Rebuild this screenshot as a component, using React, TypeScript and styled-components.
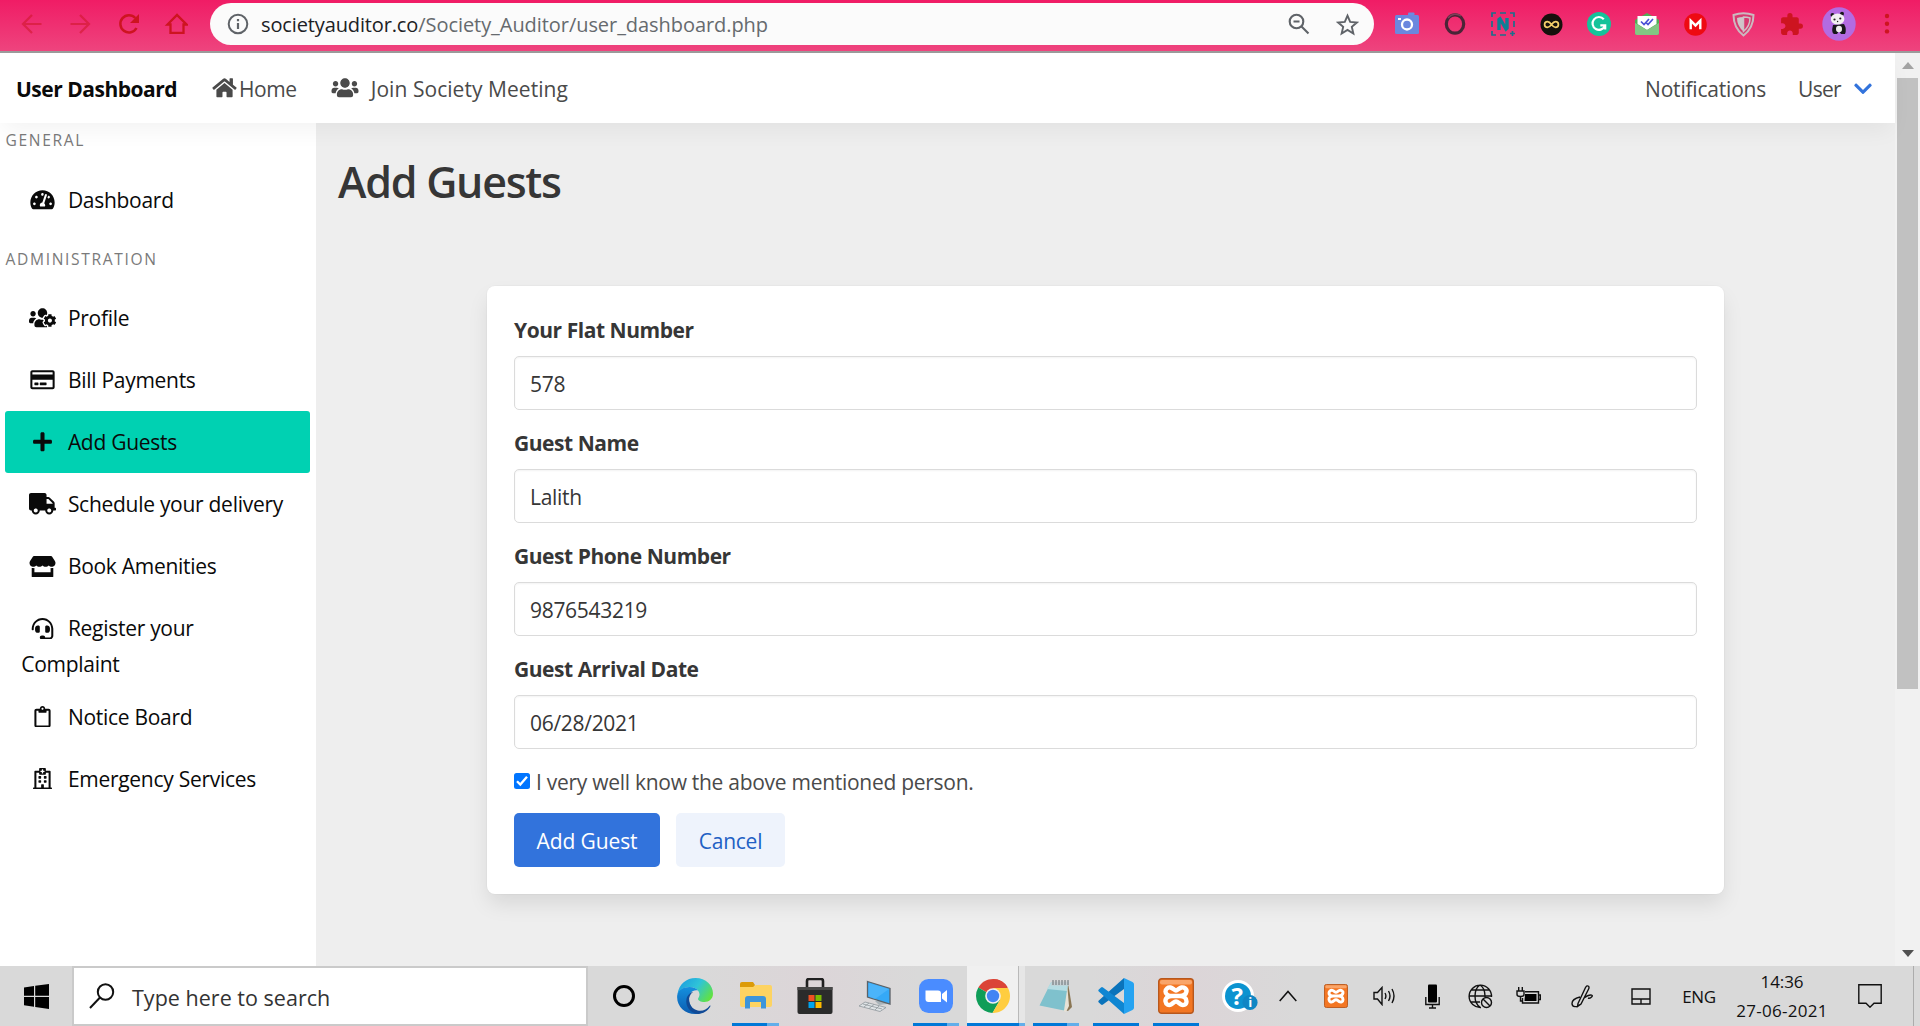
import React from "react";
import styled, { createGlobalStyle } from "styled-components";
import {
  FaHome,
  FaUsers,
  FaTachometerAlt,
  FaUsersCog,
  FaRegCreditCard,
  FaPlus,
  FaTruck,
  FaStore,
  FaHeadset,
  FaRegClipboard,
  FaRegHospital,
  FaChevronDown,
} from "react-icons/fa";
import { MdExtension } from "react-icons/md";

const Global = createGlobalStyle`
  * { box-sizing: border-box; }
  body {
    margin: 0;
    overflow: hidden;
    font-family: "Open Sans", "Noto Sans", sans-serif;
    font-size: 21px;
    letter-spacing: -0.28px;
    color: #4a4a4a;
  }
`;

const Screen = styled.div`
  width: 1920px;
  height: 1026px;
  display: flex;
  flex-direction: column;
  background: #fff;
`;

/* Browser toolbar */
const Toolbar = styled.header`
  height: 53px;
  flex: none;
  display: flex;
  align-items: flex-start;
  padding: 3px 0 0 8px;
  background: linear-gradient(#f01c65, #ee447e);
  border-bottom: 2px solid #9b9b9b;
`;
const ToolSlot = styled.div<{ $dim?: boolean }>`
  width: 48px;
  height: 42px;
  display: flex;
  align-items: center;
  justify-content: center;
  color: #cd1420;
  opacity: ${(p) => (p.$dim ? 0.5 : 1)};
`;
const Omnibox = styled.div`
  width: 1164px;
  height: 42px;
  margin: 0 9px 0 10px;
  padding: 0 15px 0 17px;
  border-radius: 21px;
  background: #fbfbfb;
  display: flex;
  align-items: center;
  color: #5f6368;
`;
const Url = styled.div`
  flex: 1;
  margin-left: 12px;
  font-size: 20px;
  line-height: 40px;
  padding-top: 1px;
  letter-spacing: -0.06px;
  color: #666a6e;
`;
const Domain = styled.span`
  color: #202124;
  letter-spacing: -0.13px;
`;
const StarWrap = styled.span`
  display: flex;
  margin-left: 26px;
`;

/* Page */
const Page = styled.div`
  flex: 1;
  min-height: 0;
  display: flex;
`;
const Document = styled.div`
  width: 1895px;
  display: flex;
  flex-direction: column;
`;
const Navbar = styled.nav`
  position: relative;
  z-index: 1;
  height: 70px;
  flex: none;
  display: flex;
  align-items: center;
  padding: 2px 23px 0 16px;
  background: #fff;
  box-shadow: 0 10.8px 21.6px -2.7px rgba(10, 10, 10, 0.05);
`;
const Brand = styled.strong`
  width: 196px;
  color: #0a0a0a;
  letter-spacing: -0.5px;
`;
const NavLink = styled.a<{ $gap?: number; $ls?: number }>`
  display: flex;
  align-items: center;
  gap: ${(p) => p.$gap ?? 0}px;
  letter-spacing: ${(p) => p.$ls ?? -0.28}px;
`;
const NavIcon = styled.span<{ $w: number; $lift?: number }>`
  display: flex;
  margin-bottom: ${(p) => p.$lift ?? 2}px;
  svg { width: ${(p) => p.$w}px; height: 21.6px; }
`;
const NavSpacer = styled.div<{ $w?: number }>`
  ${(p) => (p.$w ? `width: ${p.$w}px;` : "flex: 1;")}
`;
const Body = styled.div`
  flex: 1;
  display: flex;
  min-height: 0;
`;
const Sidebar = styled.aside`
  width: 316px;
  padding: 1px 6px 0 5px;
  color: #0a0a0a;
`;
const MenuLabel = styled.p<{ $top?: number; $bottom?: number }>`
  margin: ${(p) => p.$top ?? 0}px 0 ${(p) => p.$bottom ?? 12}px 0.5px;
  font-size: 15.6px;
  line-height: 33px;
  letter-spacing: 1.65px;
  color: #7a7a7a;
`;
const MenuItem = styled.a<{ $active?: boolean }>`
  display: block;
  padding: 10.8px 16.2px;
  border-radius: 3px;
  background: ${(p) => (p.$active ? "#00d1b2" : "transparent")};
`;
const MenuRow = styled.span`
  display: flex;
  align-items: center;
  height: 40.5px;
`;
const MenuIcon = styled.span`
  width: 32.4px;
  margin: 0 9.5px 0 4.8px;
  display: flex;
  justify-content: center;
  svg { width: 27px; height: 21.6px; }
`;
const MenuWrap = styled.span`
  display: block;
  line-height: 30px;
  margin-bottom: -4px;
`;
const Content = styled.main`
  flex: 1;
  padding: 34px 22px 0;
  background: #eee;
`;
const Title = styled.h1`
  margin: 0;
  font-size: 43px;
  font-weight: 600;
  line-height: 50px;
  letter-spacing: -1.25px;
  color: #363636;
`;
const Card = styled.form`
  width: 1237px;
  margin: 79px 0 0 149px;
  padding: 27px;
  border-radius: 8px;
  background: #fff;
  box-shadow: 0 10.8px 21.6px -2.7px rgba(10, 10, 10, 0.1), 0 0 0 1px rgba(10, 10, 10, 0.02);
`;
const Field = styled.div`
  margin-bottom: 16px;
`;
const Label = styled.label`
  display: block;
  height: 32px;
  margin-bottom: 11px;
  line-height: 34px;
  font-weight: 700;
  letter-spacing: -0.45px;
  color: #363636;
`;
const Input = styled.input`
  display: block;
  width: 100%;
  height: 54px;
  padding: 1px 15px 0;
  border: 1px solid #dbdbdb;
  border-radius: 5px;
  font: inherit;
  letter-spacing: -0.3px;
  color: #363636;
  background: #fff;
  box-shadow: inset 0 1px 2px rgba(10, 10, 10, 0.05);
  outline: none;
`;
const Consent = styled.div`
  display: flex;
  align-items: center;
  height: 34px;
  margin-bottom: 14px;
`;
const Check = styled.span`
  width: 16px;
  height: 16px;
  margin: 0 6px 2px 0;
  border-radius: 2.5px;
  background: #0075ff;
  display: flex;
`;
const Buttons = styled.div`
  display: flex;
  gap: 16px;
`;
const Button = styled.button<{ $light?: boolean }>`
  width: ${(p) => (p.$light ? 109 : 146)}px;
  height: 54px;
  padding: 1px 0 0;
  border: 0;
  border-radius: 5px;
  font: inherit;
  letter-spacing: ${(p) => (p.$light ? -0.25 : -0.1)}px;
  color: ${(p) => (p.$light ? "#2160c4" : "#fff")};
  background: ${(p) => (p.$light ? "#eef3fc" : "#3273dc")};
`;
const Scrollbar = styled.div`
  width: 25px;
  display: flex;
  flex-direction: column;
  align-items: center;
  background: #f1f1f1;
`;
const ScrollArrow = styled.div<{ $down?: boolean }>`
  height: 25px;
  display: flex;
  align-items: center;
  color: ${(p) => (p.$down ? "#505050" : "#a3a3a3")};
  transform: ${(p) => (p.$down ? "rotate(180deg)" : "none")};
`;
const Thumb = styled.div`
  width: 21px;
  height: 611px;
  margin-bottom: auto;
  background: #c1c1c1;
`;

/* Taskbar */
const Taskbar = styled.footer`
  height: 60px;
  flex: none;
  display: flex;
  background: linear-gradient(90deg, #d9d9d9 0, #d9d9d9 700px, #dcd5d8 810px, #d9d9d9 920px, #d9d9d9 1090px, #dcd5d8 1190px, #d9d9d9 1300px);
  color: #111;
`;
const Slot = styled.div<{ $w: number; $left?: number }>`
  width: ${(p) => p.$w}px;
  padding-left: ${(p) => p.$left ?? 0}px;
  flex: none;
  display: flex;
  align-items: center;
  justify-content: center;
`;
const Search = styled.div`
  width: 516px;
  flex: none;
  display: flex;
  align-items: center;
  border: 2px solid #cacaca;
  background: #fff;
  padding: 0 0 0 15px;
  font-size: 21.5px;
  letter-spacing: 0.02px;
  color: #333;
`;
const SearchText = styled.span`
  margin: 3px 0 0 17px;
`;
const TaskApp = styled.div<{ $w: number; $bar?: number; $tail?: number }>`
  width: ${(p) => p.$w}px;
  flex: none;
  display: flex;
  flex-direction: column;
  align-items: center;
  &::after {
    content: "";
    width: ${(p) => p.$bar ?? 0}px;
    height: 3px;
    background: linear-gradient(90deg, #0078d7 ${(p) => (p.$bar ?? 0) - (p.$tail ?? 0)}px, #62aeea 0);
  }
`;
const AppIcon = styled.div`
  flex: 1;
  display: flex;
  align-items: center;
  justify-content: center;
  padding-top: 3px;
`;
const ActiveApp = styled.div`
  width: 58px;
  margin: 0 1px;
  flex: none;
  display: flex;
  flex-direction: column;
`;
const ActiveTop = styled.div`
  flex: 1;
  display: flex;
`;
const ActiveFace = styled.div`
  width: 52px;
  background: #f0f0f0;
  border-right: 1px solid #b9b9b9;
  display: flex;
  align-items: center;
`;
const ActiveEdge = styled.div`
  width: 6px;
  background: #e6e6e6;
`;
const ActiveBar = styled.div`
  height: 3px;
  background: linear-gradient(90deg, #0078d7 52px, #62aeea 0);
`;
const Tray = styled.span`
  font-size: 17px;
  letter-spacing: -0.4px;
  padding-top: 1px;
`;
const Clock = styled.div`
  width: 108px;
  flex: none;
  padding-top: 2px;
  font-size: 17px;
  line-height: 28.5px;
  letter-spacing: 0.3px;
  text-align: center;
`;
const ClockTime = styled.div`
  letter-spacing: -0.1px;
`;
const ShowDesktop = styled.div`
  width: 16px;
  flex: none;
  border-left: 1px solid #acacac;
  margin-left: 9px;
`;

const Xampp = ({ size }: { size: number }) => (
  <svg width={size} height={size} viewBox="0 0 36 36">
    <rect x="0.7" y="0.7" width="34.6" height="34.6" rx="3" fill="#f37623" stroke="#b8571c" strokeWidth="1.4" />
    <rect x="2" y="2" width="32" height="4.500" rx="2" fill="#f9a56a" />
    <g fill="none" stroke="#fff" strokeWidth="4.400" strokeLinejoin="round" strokeLinecap="round">
      <path d="M14 18h8M14 18c-4 0-6.500-2-6.500-4.500S10 9 12.500 9.500s4 3 5.500 3 3-2.500 5.500-3S29 11 28.500 13.500 26 18 22 18M14 18c-4 0-7 2-6.500 5.500S11 27.500 13 26.500s3-3 5-3 3 2 5 3 5.500.5 5.500-3S26 18 22 18" />
    </g>
  </svg>
);

const menu = [
  { icon: <FaUsersCog />, text: "Profile" },
  { icon: <FaRegCreditCard />, text: "Bill Payments" },
  { icon: <FaPlus />, text: "Add Guests", active: true },
  { icon: <FaTruck />, text: "Schedule your delivery" },
  { icon: <FaStore />, text: "Book Amenities" },
  { icon: <FaHeadset />, text: "Register your", wrap: "Complaint" },
  { icon: <FaRegClipboard />, text: "Notice Board" },
  { icon: <FaRegHospital />, text: "Emergency Services" },
];

const fields = [
  ["Your Flat Number", "578"],
  ["Guest Name", "Lalith"],
  ["Guest Phone Number", "9876543219"],
  ["Guest Arrival Date", "06/28/2021"],
];

const line = { fill: "none", stroke: "currentColor" } as const;

function BrowserBar() {
  return (
    <Toolbar>
      <ToolSlot $dim>
        <svg width="22" height="22" viewBox="0 0 22 22" {...line} strokeWidth="2.2"><path d="M20.500 11H3M11 2l-9 9 9 9" /></svg>
      </ToolSlot>
      <ToolSlot $dim>
        <svg width="22" height="22" viewBox="0 0 22 22" {...line} strokeWidth="2.2"><path d="M1.500 11H19M11 2l9 9-9 9" /></svg>
      </ToolSlot>
      <ToolSlot>
        <svg width="24" height="22" viewBox="-2 0 24 22" {...line} strokeWidth="2.5">
          <path d="M18.500 15A8.600 8.600 0 1 1 17.300 5" /><path d="M21 1v9h-9z" fill="currentColor" stroke="none" />
        </svg>
      </ToolSlot>
      <ToolSlot>
        <svg width="24" height="22" viewBox="-2 0 24 22" {...line} strokeWidth="2.3"><path d="M1.500 11.500 11 2l9.500 9.500H17.500V19.800h-13V11.500z" /></svg>
      </ToolSlot>
      <Omnibox>
        <svg width="22" height="22" viewBox="0 0 22 22" {...line} strokeWidth="2"><circle cx="11" cy="11" r="9.300" /><path d="M11 10v6M11 6v2.200" strokeWidth="2.200" /></svg>
        <Url><Domain>societyauditor.co</Domain>/Society_Auditor/user_dashboard.php</Url>
        <svg width="22" height="22" viewBox="0 0 22 22" {...line} strokeWidth="2.100"><circle cx="8.500" cy="8.500" r="6.800" /><path d="M13.500 13.500 20.500 20.500M5.500 8.500h6" /></svg>
        <StarWrap>
          <svg width="23" height="23" viewBox="0 0 24 24" {...line} strokeWidth="2"><path d="M12 2.800l2.800 6.500 7 .6-5.300 4.600 1.600 6.900-6.100-3.700-6.100 3.700 1.600-6.900L2.200 9.900l7-.6z" /></svg>
        </StarWrap>
      </Omnibox>
      <ToolSlot>
        <svg width="24" height="24" viewBox="0 0 24 24">
          <rect x="13" y="0.500" width="6.500" height="3" rx="1" fill="#6e8be0" /><rect y="3" width="24" height="19" rx="1.500" fill="#6b87de" />
          <circle cx="12" cy="12.500" r="5" fill="none" stroke="#fff" strokeWidth="2.300" /><rect x="3" y="6" width="3" height="2" fill="#fff" />
        </svg>
      </ToolSlot>
      <ToolSlot>
        <svg width="22" height="24" viewBox="0 0 22 24" fill="none"><ellipse cx="11" cy="12" rx="8.700" ry="9.200" stroke="#4a2437" strokeWidth="3.200" /><path d="M4 6a9.500 10 0 0 1 13-2" stroke="#7d4058" strokeWidth="1.500" /></svg>
      </ToolSlot>
      <ToolSlot>
        <svg width="24" height="24" viewBox="0 0 24 24" fill="none" stroke="#1b6f8c">
          <path d="M1 5V1h4M9 1h6M19 1h4v4M23 9v6M1 9v6M1 19v4h4M9 23h6M19 21.500h5M21.500 19v5" strokeWidth="1.700" />
          <path d="M8 18V7.500l1-.8L15 17l1-1V6" stroke="#0d8095" strokeWidth="3.400" />
        </svg>
      </ToolSlot>
      <ToolSlot>
        <svg width="23" height="23" viewBox="0 0 24 24"><circle cx="12" cy="12" r="11.500" fill="#16100c" /><path d="M12 12c-1.500-2-2.500-3-4.200-3a3 3 0 0 0 0 6c1.700 0 2.700-1 4.200-3s2.500-3 4.200-3a3 3 0 0 1 0 6c-1.700 0-2.700-1-4.200-3z" fill="none" stroke="#f6cf6a" strokeWidth="1.800" /></svg>
      </ToolSlot>
      <ToolSlot>
        <svg width="24" height="24" viewBox="0 0 24 24"><circle cx="12" cy="12" r="12" fill="#15c39a" /><path d="M16.800 7.200A6.400 6.400 0 1 0 18 13.500M13.300 13.300h4.900v4.200" fill="none" stroke="#fff" strokeWidth="2.200" /></svg>
      </ToolSlot>
      <ToolSlot>
        <svg width="24" height="24" viewBox="0 0 24 24"><path d="M0 8 12 1l12 7v13a2 2 0 0 1-2 2H2a2 2 0 0 1-2-2z" fill="#4fae55" /><path d="M2.500 4h19v8L12 18l-9.500-6z" fill="#fff" /><path d="M0 11l12 7 12-7v10a2 2 0 0 1-2 2H2a2 2 0 0 1-2-2z" fill="#83c783" /><path d="M6 9.500l3 3 5-5.500M11.500 11l1.500 1.500 5-5.500" fill="none" stroke="#4b51d6" strokeWidth="1.700" /></svg>
      </ToolSlot>
      <ToolSlot>
        <svg width="23" height="23" viewBox="0 0 24 24"><circle cx="12" cy="12" r="11.800" fill="#ee0a12" /><path d="M7 17V8l5 5 5-5v9" fill="none" stroke="#fff" strokeWidth="2.500" /></svg>
      </ToolSlot>
      <ToolSlot>
        <svg width="23" height="25" viewBox="0 0 23 25"><path d="M1.500 3Q11.500-.5 21.500 3 21.500 16 11.500 23.500 1.500 16 1.500 3z" fill="#d83a70" stroke="#ccb9c0" strokeWidth="2" /><path d="M11.500 5q-4 0-6.500 1 0 8 6.500 13.500z" fill="#cfc6ca" /><path d="M11.500 5q4 0 6.500 1 0 8-6.500 13.500z" fill="none" stroke="#cfc0c6" strokeWidth="1.500" /></svg>
      </ToolSlot>
      <ToolSlot><MdExtension size={25} /></ToolSlot>
      <ToolSlot>
        <svg width="34" height="34" viewBox="0 0 34 34">
          <circle cx="17" cy="17" r="16.700" fill="#b36be2" />
          <path d="M11 18q-2 8 1 9h3l2-3 2 3h4q2-5-1-10z" fill="#17171b" /><ellipse cx="17" cy="22" rx="3" ry="3.300" fill="#eee" />
          <circle cx="10.500" cy="8" r="2" fill="#17171b" /><circle cx="20" cy="6.700" r="2" fill="#17171b" />
          <ellipse cx="15.600" cy="12" rx="6.800" ry="5.600" fill="#f2f0f2" /><circle cx="12.500" cy="12.500" r="1.100" fill="#222" /><circle cx="18.300" cy="11.500" r="1.100" fill="#222" /><circle cx="15.600" cy="14.500" r="0.700" fill="#222" />
        </svg>
      </ToolSlot>
      <ToolSlot>
        <svg width="6" height="22" viewBox="0 0 6 22" fill="currentColor"><circle cx="3" cy="3" r="2.200" /><circle cx="3" cy="10.700" r="2.200" /><circle cx="3" cy="18.400" r="2.200" /></svg>
      </ToolSlot>
    </Toolbar>
  );
}

function WindowsTaskbar() {
  return (
    <Taskbar>
      <Slot $w={72}>
        <svg width="25" height="25" viewBox="0 0 25 25" fill="#000"><path d="M0 3.500 10 2v9.800H0zM11.200 1.800 25 0v11.800H11.200zM0 13h10v9.800L0 21.300zM11.200 13H25v12l-13.800-2z" /></svg>
      </Slot>
      <Search>
        <svg width="26" height="26" viewBox="0 0 26 26" fill="none" stroke="#111" strokeWidth="2"><circle cx="16.500" cy="9" r="7.700" /><path d="M11 14.500 1 25" /></svg>
        <SearchText>Type here to search</SearchText>
      </Search>
      <Slot $w={76}>
        <svg width="26" height="26" viewBox="0 0 26 26" fill="none"><circle cx="11" cy="13" r="9.500" stroke="#000" strokeWidth="3" /></svg>
      </Slot>
      <TaskApp $w={61}>
        <AppIcon>
          <svg width="36" height="36" viewBox="0 0 36 36">
            <defs>
              <linearGradient id="edgeTop" x1="0" x2="1" y1="0.200" y2="0.700"><stop offset="0" stopColor="#1c9de0" /><stop offset="0.500" stopColor="#2fc4d8" /><stop offset="1" stopColor="#62e23f" /></linearGradient>
              <linearGradient id="edgeLow" x1="0" x2="0" y1="0" y2="1"><stop offset="0" stopColor="#1590df" /><stop offset="1" stopColor="#0b5cb0" /></linearGradient>
            </defs>
            <path d="M.5 16C2 6 9.500 0 18.500 0 29 0 36 7.500 36 15.500 36 21 32 24 27.500 24c-4 0-6.500-1.500-6.500-3 0-1 1.500-2 1.500-4.500C22.500 12 18 9 12.500 9 6.500 9 2.500 12 .5 16z" fill="url(#edgeTop)" />
            <path d="M.2 17.500C1 12 6 9 12.500 9c4 0 7 1.500 8.500 3.500-6-1-9 3-9 8 0 8 6 14 12 14.500-2 .8-4 1-6 1C7.500 36-.8 27.500.2 17.500z" fill="url(#edgeLow)" />
            <path d="M16 14c-6 4-5 14 2 17.500 6 3 11 .5 14.500-3.500.8-.8 1.200-.2.800.6C31 33 26 36 21 36c-8-1-13-8-11.500-15 .7-3.500 3.500-6.500 6.500-7z" fill="#104a96" />
          </svg>
        </AppIcon>
      </TaskApp>
      <TaskApp $w={60} $bar={47} $tail={12}>
        <AppIcon>
          <svg width="33" height="28" viewBox="0 0 33 28"><path d="M1 2a2 2 0 0 1 2-2h11l2 3-2 3H1z" fill="#dc9b08" /><path d="M1 5h13l3-2h14q2 0 2 2v18q0 2-2 2H3q-2 0-2-2z" fill="#fdd362" /><path d="M6 26.500V17q0-3 3-3h15q3 0 3 3v9.500h-5V20H11v6.500z" fill="#3d95da" /></svg>
        </AppIcon>
      </TaskApp>
      <TaskApp $w={60}>
        <AppIcon>
          <svg width="36" height="36" viewBox="0 0 36 36"><path d="M10 10V3q0-2 2-2h12q2 0 2 2v7" fill="none" stroke="#202020" strokeWidth="2.600" /><path d="M.5 9h35v25q0 2-2 2h-31q-2 0-2-2z" fill="#2b2b2b" /><path d="M.5 9h35v3H.5z" fill="#484848" /><path d="M11.500 17h6v6h-6z" fill="#f25022" /><path d="M18.500 17h6v6h-6z" fill="#7fba00" /><path d="M11.500 24h6v6h-6z" fill="#00a4ef" /><path d="M18.500 24h6v6h-6z" fill="#ffb900" /></svg>
        </AppIcon>
      </TaskApp>
      <TaskApp $w={60}>
        <AppIcon>
          <svg width="34" height="34" viewBox="0 0 34 34"><path d="M17 22l4 4 8-1-1-3z" fill="#a9b4ba" /><path d="M9.500 2.500 32 9.500V25L9.500 18z" fill="#35a9f7" stroke="#5b6268" strokeWidth="1.300" /><path d="M10.500 4 31 10 17 20l-6.500-2.500z" fill="#5abdfb" opacity=".6" /><path d="M7 23l21 5.500-6 4L1 27z" fill="#dfe3e6" stroke="#8f979c" strokeWidth=".8" /><path d="M5 25l19 5M11 24l-5 4M16 25.500l-5 4M21 27l-4 4" stroke="#8f979c" strokeWidth=".8" /></svg>
        </AppIcon>
      </TaskApp>
      <TaskApp $w={61} $bar={46} $tail={12}>
        <AppIcon>
          <svg width="34" height="34" viewBox="0 0 34 34"><rect width="34" height="34" rx="9.500" fill="#4a8cff" /><path d="M6.500 11.500h12.500q3 0 3 3V23H9.500q-3 0-3-3z" fill="#fff" /><path d="M23 15l5-4v12.500l-5-4z" fill="#fff" /></svg>
        </AppIcon>
      </TaskApp>
      <ActiveApp>
        <ActiveTop>
          <ActiveFace>
            <AppIcon>
              <svg width="34" height="34" viewBox="0 0 34 34">
                <path d="M17 17 2.300 8.500A17 17 0 0 1 31.700 8.500z" fill="#db4437" /><path d="M17 0a17 17 0 0 1 14.700 8.500H17z" fill="#db4437" />
                <path d="M17 17 2.300 8.500A17 17 0 0 0 16.500 34l7.500-13z" fill="#0f9d58" />
                <path d="M17 9h15A17 17 0 0 1 16.500 34L24 21z" fill="#ffcd40" />
                <circle cx="17" cy="17" r="7.800" fill="#f1f1f1" /><circle cx="17" cy="17" r="6.200" fill="#4285f4" />
              </svg>
            </AppIcon>
          </ActiveFace>
          <ActiveEdge />
        </ActiveTop>
        <ActiveBar />
      </ActiveApp>
      <TaskApp $w={60} $bar={46} $tail={12}>
        <AppIcon>
          <svg width="34" height="34" viewBox="0 0 34 34"><path d="M29 4l4 24-4 4-8-2z" fill="#8a7654" /><path d="M28 3l2 24-3 6-7-3z" fill="#e7e2d6" /><path d="M12 3.500 29 4.500 25 31.500 .5 26.500z" fill="#7fc1cd" /><path d="M12 3.500 29 4.500 28 12 8 10z" fill="#b5dde3" /><path d="M13 2.500h17v4H12z" fill="#c7cfd2" /><path d="M14 1v5M17 1v5M20 1v5M23 1v5M26 1v5M29 1v5" stroke="#676e72" /></svg>
        </AppIcon>
      </TaskApp>
      <TaskApp $w={60} $bar={46}>
        <AppIcon>
          <svg width="36" height="36" viewBox="0 0 36 36"><path d="M26 0v11L5 26.500q-1 .8-2 0L.8 24.500q-1-1 0-2z" fill="#0a73bb" /><path d="M26 36V25L5 9.500q-1-.8-2 0L.8 11.500q-1 1 0 2z" fill="#0f86d2" /><path d="M26 0l8.500 4q1.500.8 1.500 2.300v23.400q0 1.500-1.500 2.300L26 36z" fill="#26a3f1" /></svg>
        </AppIcon>
      </TaskApp>
      <TaskApp $w={60} $bar={46}><AppIcon><Xampp size={36} /></AppIcon></TaskApp>
      <Slot $w={58} $left={10}>
        <svg width="36" height="34" viewBox="0 0 36 34">
          <circle cx="16" cy="17" r="16" fill="#fff" /><circle cx="16" cy="17" r="13" fill="#0b93d0" />
          <text x="15" y="25.500" textAnchor="middle" fontFamily="Open Sans, sans-serif" fontWeight="700" fontSize="24" fill="#fff">?</text>
          <circle cx="28" cy="23.500" r="7.600" fill="#0f86c4" /><text x="28" y="28" textAnchor="middle" fontFamily="Open Sans, sans-serif" fontWeight="700" fontSize="13" fill="#fff">i</text>
        </svg>
      </Slot>
      <Slot $w={48}><svg width="18" height="12" viewBox="0 0 18 12" {...line} strokeWidth="1.500"><path d="M.7 11 9 1.500 17.300 11" /></svg></Slot>
      <Slot $w={48}><Xampp size={24} /></Slot>
      <Slot $w={48}><svg width="23" height="20" viewBox="0 0 23 20" {...line} strokeWidth="1.400"><path d="M1 6.500h3.500L9 1.500v17L4.500 13H1zM12 7q1.800 3 0 6M15.500 5q3 5 0 10M19 3q4 7 0 14" /></svg></Slot>
      <Slot $w={48}><svg width="15" height="25" viewBox="0 0 15 25" {...line} strokeWidth="1.400"><rect x="3" y=".5" width="9" height="18" rx="1" fill="#000" stroke="none" /><path d="M.8 13v7.500h13.400V13M7.500 21v3M4 24h7" /></svg></Slot>
      <Slot $w={48}>
        <svg width="25" height="25" viewBox="0 0 25 25" {...line} strokeWidth="1.400"><path d="M13 23.500A11.200 11.200 0 1 1 23.500 13M12 23q-5-3-5-11t5-11q5 3 5 11v1M1 12h22M3 6h18.500M3 18h9" /><circle cx="18.500" cy="18.500" r="5" /><path d="M15 15l7 7" /></svg>
      </Slot>
      <Slot $w={48}><svg width="25" height="18" viewBox="0 0 25 18" {...line} strokeWidth="1.400"><path d="M9 4.700h13.500V16H6.500v-5M22.500 8h1.800v4.500h-1.800M1 4h7v3.500q0 2-3.500 2T1 7.500zM2.700 0v4M6.300 0v4M4.500 9.500V14h2" /><path d="M9 7h11.500v7H8.500z" fill="#000" stroke="none" /></svg></Slot>
      <Slot $w={60}><svg width="22" height="23" viewBox="0 0 22 23" {...line} strokeWidth="1.400"><path d="M7 18.500 14.500 2.500q1.500-2.500 3-1.200 1 1 0 3L10 19l-3.500 2.500zM9 12Q1 14 1 18.500c0 4 5 4 8 1M13 13q4-3 6.500-3t1.500 1.500q-2 2.500-4 1.500" /></svg></Slot>
      <Slot $w={58}><svg width="20" height="17" viewBox="0 0 20 17" {...line} strokeWidth="1.400"><path d="M1 1h18v15H1zM1 11h18M10 11v5" /></svg></Slot>
      <Slot $w={58}><Tray>ENG</Tray></Slot>
      <Clock><ClockTime>14:36</ClockTime>27-06-2021</Clock>
      <Slot $w={68}><svg width="24" height="24" viewBox="0 0 24 24" {...line} strokeWidth="1.400"><path d="M.8.8h22.400v18.400H16L12 23.200 8 19.200H.8z" /></svg></Slot>
      <ShowDesktop />
    </Taskbar>
  );
}

export default function App() {
  return (
    <Screen>
      <Global />
      <BrowserBar />
      <Page>
        <Document>
          <Navbar>
            <Brand>User Dashboard</Brand>
            <NavLink $gap={2} $ls={-0.4}><NavIcon $w={25}><FaHome /></NavIcon>Home</NavLink>
            <NavSpacer $w={34} />
            <NavLink $gap={12} $ls={0.05}><NavIcon $w={28}><FaUsers /></NavIcon>Join Society Meeting</NavLink>
            <NavSpacer />
            <NavLink $ls={-0.2}>Notifications</NavLink>
            <NavSpacer $w={32} />
            <NavLink $gap={13} $ls={-0.7}>User<NavIcon $w={18} $lift={0}><FaChevronDown color="#3273dc" /></NavIcon></NavLink>
          </Navbar>
          <Body>
            <Sidebar>
              <MenuLabel>GENERAL</MenuLabel>
              <MenuItem><MenuRow><MenuIcon><FaTachometerAlt /></MenuIcon>Dashboard</MenuRow></MenuItem>
              <MenuLabel $top={12} $bottom={10.8}>ADMINISTRATION</MenuLabel>
              {menu.map((m) => (
                <MenuItem key={m.text} $active={m.active}>
                  <MenuRow><MenuIcon>{m.icon}</MenuIcon>{m.text}</MenuRow>
                  {m.wrap && <MenuWrap>{m.wrap}</MenuWrap>}
                </MenuItem>
              ))}
            </Sidebar>
            <Content>
              <Title>Add Guests</Title>
              <Card>
                {fields.map(([label, value]) => (
                  <Field key={label}>
                    <Label>{label}</Label>
                    <Input defaultValue={value} />
                  </Field>
                ))}
                <Consent>
                  <Check><svg width="16" height="16" viewBox="0 0 16 16" fill="none" stroke="#fff" strokeWidth="2.300"><path d="M3 8.300l3.300 3.300L13 3.800" /></svg></Check>
                  I very well know the above mentioned person.
                </Consent>
                <Buttons>
                  <Button type="button">Add Guest</Button>
                  <Button type="button" $light>Cancel</Button>
                </Buttons>
              </Card>
            </Content>
          </Body>
        </Document>
        <Scrollbar>
          <ScrollArrow><svg width="12" height="7" viewBox="0 0 12 7"><path d="M0 7 6 0l6 7z" fill="currentColor" /></svg></ScrollArrow>
          <Thumb />
          <ScrollArrow $down><svg width="12" height="7" viewBox="0 0 12 7"><path d="M0 7 6 0l6 7z" fill="currentColor" /></svg></ScrollArrow>
        </Scrollbar>
      </Page>
      <WindowsTaskbar />
    </Screen>
  );
}
